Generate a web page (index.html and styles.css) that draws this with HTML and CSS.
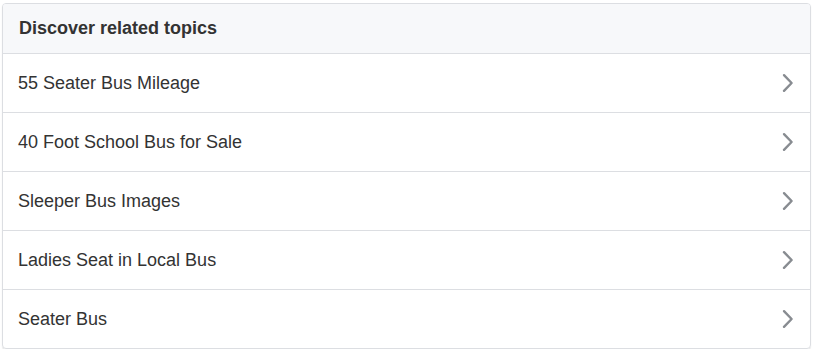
FILE: index.html
```html
<!DOCTYPE html>
<html lang="en">
<head>
  <meta charset="UTF-8">
  <title>Discover related topics</title>
  <link rel="stylesheet" href="styles.css">
</head>
<body>

<div class="related">
  <div class="related-head">Discover related topics</div>
  <a class="related-item" href="#">
    <span>55 Seater Bus Mileage</span>
    <svg class="chev" width="14" height="20" viewBox="0 0 14 20"><path d="M3 2.2 L10.6 10 L3 17.8" /></svg>
  </a>
  <a class="related-item" href="#">
    <span>40 Foot School Bus for Sale</span>
    <svg class="chev" width="14" height="20" viewBox="0 0 14 20"><path d="M3 2.2 L10.6 10 L3 17.8" /></svg>
  </a>
  <a class="related-item" href="#">
    <span>Sleeper Bus Images</span>
    <svg class="chev" width="14" height="20" viewBox="0 0 14 20"><path d="M3 2.2 L10.6 10 L3 17.8" /></svg>
  </a>
  <a class="related-item" href="#">
    <span>Ladies Seat in Local Bus</span>
    <svg class="chev" width="14" height="20" viewBox="0 0 14 20"><path d="M3 2.2 L10.6 10 L3 17.8" /></svg>
  </a>
  <a class="related-item" href="#">
    <span>Seater Bus</span>
    <svg class="chev" width="14" height="20" viewBox="0 0 14 20"><path d="M3 2.2 L10.6 10 L3 17.8" /></svg>
  </a>
</div>

</body>
</html>
```

FILE: styles.css
```css
body {
  margin: 0;
  padding: 3px 4px 0 2px;
  background: #fff;
  font-family: 'Liberation Sans', Arial, sans-serif;
  color: #333;
}

.related {
  border: 1px solid #dcdee2;
  border-radius: 4px;
  box-shadow: 0 1px 1px rgba(0, 0, 0, 0.12);
  overflow: hidden;
}

.related-head {
  background: #f7f8fa;
  height: 49px;
  line-height: 49px;
  padding-left: 16px;
  font-size: 18px;
  font-weight: bold;
  color: #333;
  border-bottom: 1px solid #dcdee2;
}

.related-item {
  display: flex;
  align-items: center;
  justify-content: space-between;
  height: 58px;
  padding: 0 15px 0 15px;
  font-size: 18px;
  color: #333;
  text-decoration: none;
  border-bottom: 1px solid #dcdee2;
}

.related-item:last-child {
  border-bottom: none;
}

.chev path {
  fill: none;
  stroke: #888c91;
  stroke-width: 2.4;
  stroke-linecap: round;
  stroke-linejoin: round;
}
```
